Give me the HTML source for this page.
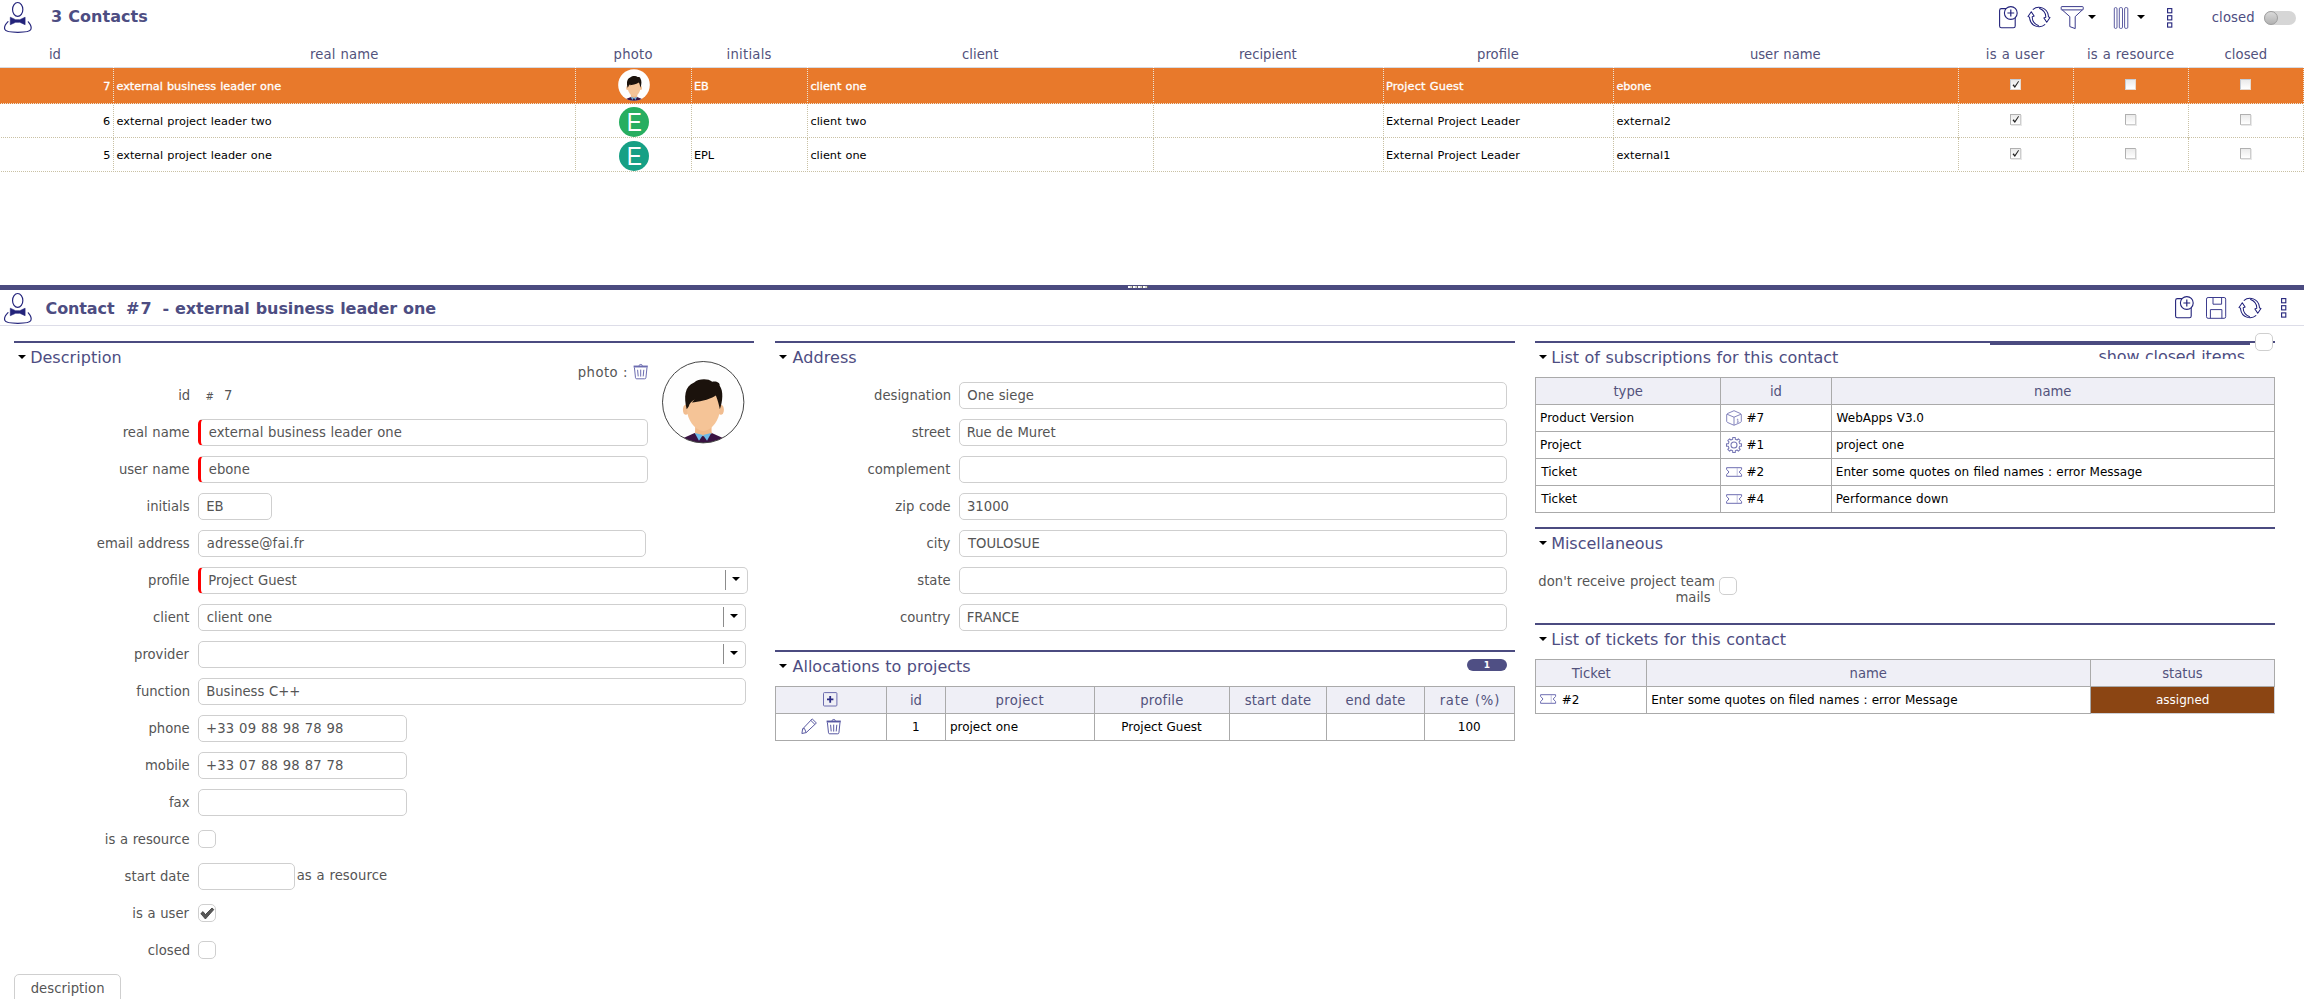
<!DOCTYPE html>
<html><head><meta charset="utf-8"><title>Contacts</title>
<style>
html,body{margin:0;padding:0;background:#fff;}
body{width:2304px;height:999px;position:relative;overflow:hidden;font-family:"DejaVu Sans","Liberation Sans",sans-serif;}
.t{position:absolute;white-space:nowrap;line-height:20px;height:20px;word-spacing:0.034em;}
.b{position:absolute;box-sizing:border-box;}
.in{position:absolute;box-sizing:border-box;border:1px solid #cfcfcf;border-radius:5px;background:#fff;height:27px;}
.req{border-left:3px solid #ff0000;}
.cb{position:absolute;box-sizing:border-box;border:1px solid #cfcfcf;border-radius:5px;background:#fff;width:18px;height:18px;}
.gcb{position:absolute;box-sizing:border-box;border:1px solid;border-color:#b0b0b0 #cdcdcd #cdcdcd #b0b0b0;width:11px;height:11px;background:linear-gradient(#eaeaea,#ffffff);box-shadow:1px 1px 0 #e8e8e8;}
.gcbo{border-color:#c4ccd6 #e6d9cf #e6d9cf #c4ccd6;box-shadow:none;}
svg{position:absolute;overflow:visible;}
.tb{position:absolute;box-sizing:border-box;border-collapse:collapse;}
.hl{position:absolute;height:2px;background:#4b4b80;}
.arr{position:absolute;width:0;height:0;border-left:4px solid transparent;border-right:4px solid transparent;border-top:4px solid #000;}
.cell{position:absolute;box-sizing:border-box;border:1px solid #aaaaaa;}
.hd{background:#efeff6;}
</style></head><body>

<svg style="left:0px;top:0px" width="36" height="36" viewBox="0 0 36 36" fill="none" stroke="#23237b" stroke-width="1.15">
<ellipse cx="17.7" cy="9.45" rx="5.15" ry="6.95"/>
<path d="M10.3 17.2 L10.3 24.7 L15.6 22.3 L19.8 22.3 L25.1 24.7 L25.1 17.2 L19.8 19.7 L15.6 19.7 Z" fill="#23237b" stroke-width="0.6"/>
<path d="M8 21.6 C5.2 24.4 4.1 27.4 4.8 29.4 C5.5 31.3 11 32.3 17.8 32.3 C24.6 32.3 30.2 31.3 30.9 29.4 C31.6 27.4 30.6 24.4 28.3 21.8" stroke-linecap="round"/>
</svg>
<div class="t" style="top:7px;font-size:16px;color:#4d4d82;font-weight:bold;left:50.93px;letter-spacing:0.039px;">3 Contacts</div>
<svg style="left:1998.6px;top:5.6px" width="22" height="24" viewBox="0 0 22 24" fill="none" stroke="#23237b" stroke-width="1.1">
<rect x="0.6" y="2.6" width="15.6" height="19.2" rx="1.8"/>
<circle cx="11.8" cy="7" r="6.4" fill="#fff"/>
<path d="M8.4 7 H15.2 M11.8 3.6 V10.4" stroke-width="1.2"/>
</svg>
<svg style="left:2025.55px;top:4.300000000000001px" width="26" height="26" viewBox="-13 -13 26 26" fill="none" stroke="#1f1f7a" stroke-width="1.05" stroke-linejoin="round">
<path d="M-6.5 -7.8 A9.9 9.9 0 0 1 9.75 -1.7 L9.9 -0.1 L11.5 0.6 L8.1 5.5 L5.1 0.9 L7.1 0.2 L7.1 -0.3 Q7 -6.6 0.2 -9.2" transform="scale(0.955)"/>
<path d="M-6.5 -7.8 A9.9 9.9 0 0 1 9.75 -1.7 L9.9 -0.1 L11.5 0.6 L8.1 5.5 L5.1 0.9 L7.1 0.2 L7.1 -0.3 Q7 -6.6 0.2 -9.2" transform="scale(0.955) rotate(180)"/>
</svg>
<svg style="left:2060px;top:5px" width="26" height="26" viewBox="0 0 26 26" fill="none" stroke="#3a3a8c" stroke-width="1" stroke-linejoin="round">
<rect x="1.2" y="1.6" width="22" height="3.3" rx="0.6"/>
<path d="M2.2 4.9 L9.8 11.6 L9.8 21.6 L15.2 23.6 L15.2 11.6 L22.4 4.9"/>
</svg>
<div class="arr" style="left:2087.5px;top:15px"></div>
<svg style="left:2113px;top:6px" width="18" height="24" viewBox="0 0 18 24" fill="none" stroke="#4a4a96" stroke-width="0.9">
<rect x="1.3" y="1.6" width="2.7" height="20.8" rx="1.2"/><rect x="6.3" y="1.6" width="3.2" height="20.8" rx="1.2"/><rect x="11.6" y="1.6" width="3.2" height="20.8" rx="1.2"/></svg>
<div class="arr" style="left:2136.5px;top:15px"></div>
<svg style="left:2167px;top:8.2px" width="7" height="22" viewBox="0 0 7 22" fill="none" stroke="#23237b" stroke-width="1.1">
<rect x="0.6" y="0.6" width="4.2" height="4.2"/><rect x="0.6" y="7.7" width="4.2" height="4.2"/><rect x="0.6" y="14.9" width="4.2" height="4.2"/></svg>
<div class="t" style="top:8px;font-size:13.2px;color:#4d4d82;left:2211.77px;letter-spacing:0.098px;">closed</div>
<div class="b" style="left:2264px;top:11px;width:32px;height:14px;border-radius:7px;background:#d6d6d6;"></div>
<div class="b" style="left:2264px;top:11px;width:14px;height:14px;border-radius:7px;background:linear-gradient(#dadada,#b2b2b2);border:1px solid #9e9e9e;"></div>
<div class="t" style="top:45px;font-size:13.2px;color:#52527c;left:48.96px;">id</div>
<div class="t" style="top:45px;font-size:13.2px;color:#52527c;left:309.95px;letter-spacing:0.171px;">real name</div>
<div class="t" style="top:45px;font-size:13.2px;color:#52527c;left:613.55px;letter-spacing:0.246px;">photo</div>
<div class="t" style="top:45px;font-size:13.2px;color:#52527c;left:726.61px;letter-spacing:0.236px;">initials</div>
<div class="t" style="top:45px;font-size:13.2px;color:#52527c;left:962.08px;">client</div>
<div class="t" style="top:45px;font-size:13.2px;color:#52527c;left:1238.94px;">recipient</div>
<div class="t" style="top:45px;font-size:13.2px;color:#52527c;left:1477.12px;">profile</div>
<div class="t" style="top:45px;font-size:13.2px;color:#52527c;left:1749.89px;">user name</div>
<div class="t" style="top:45px;font-size:13.2px;color:#52527c;left:1985.86px;letter-spacing:0.223px;">is a user</div>
<div class="t" style="top:45px;font-size:13.2px;color:#52527c;left:2086.96px;letter-spacing:0.184px;">is a resource</div>
<div class="t" style="top:45px;font-size:13.2px;color:#52527c;left:2224.52px;letter-spacing:0.058px;">closed</div>
<div class="b" style="left:0px;top:67px;width:2304px;height:1px;background:#d6dbe3;"></div>
<div class="b" style="left:113px;top:67px;width:1px;height:1px;background:#fff;"></div>
<div class="b" style="left:575px;top:67px;width:1px;height:1px;background:#fff;"></div>
<div class="b" style="left:691px;top:67px;width:1px;height:1px;background:#fff;"></div>
<div class="b" style="left:807px;top:67px;width:1px;height:1px;background:#fff;"></div>
<div class="b" style="left:1153px;top:67px;width:1px;height:1px;background:#fff;"></div>
<div class="b" style="left:1383px;top:67px;width:1px;height:1px;background:#fff;"></div>
<div class="b" style="left:1613px;top:67px;width:1px;height:1px;background:#fff;"></div>
<div class="b" style="left:1958px;top:67px;width:1px;height:1px;background:#fff;"></div>
<div class="b" style="left:2073px;top:67px;width:1px;height:1px;background:#fff;"></div>
<div class="b" style="left:2188px;top:67px;width:1px;height:1px;background:#fff;"></div>
<div class="b" style="left:2303px;top:67px;width:1px;height:1px;background:#fff;"></div>
<div class="b" style="left:0px;top:68px;width:2304px;height:36px;background:#e8792b;"></div>
<div class="b" style="left:1px;top:103px;width:2303px;height:1px;background:repeating-linear-gradient(to right,#eae4d6 0,#eae4d6 1px,transparent 1px,transparent 2px);"></div>
<div class="b" style="left:1px;top:137px;width:2303px;height:1px;background:repeating-linear-gradient(to right,#c9c1a4 0,#c9c1a4 1px,transparent 1px,transparent 2px);"></div>
<div class="b" style="left:1px;top:171px;width:2303px;height:1px;background:repeating-linear-gradient(to right,#c9c1a4 0,#c9c1a4 1px,transparent 1px,transparent 2px);"></div>
<div class="b" style="left:113px;top:69px;width:1px;height:33px;background:repeating-linear-gradient(to bottom,#eae4d6 0,#eae4d6 1px,transparent 1px,transparent 2px);"></div>
<div class="b" style="left:113px;top:105px;width:1px;height:65px;background:repeating-linear-gradient(to bottom,#c9c1a4 0,#c9c1a4 1px,transparent 1px,transparent 2px);"></div>
<div class="b" style="left:113px;top:138px;width:1px;height:1px;background:#c9c1a4;"></div>
<div class="b" style="left:575px;top:69px;width:1px;height:33px;background:repeating-linear-gradient(to bottom,#eae4d6 0,#eae4d6 1px,transparent 1px,transparent 2px);"></div>
<div class="b" style="left:575px;top:105px;width:1px;height:65px;background:repeating-linear-gradient(to bottom,#c9c1a4 0,#c9c1a4 1px,transparent 1px,transparent 2px);"></div>
<div class="b" style="left:575px;top:138px;width:1px;height:1px;background:#c9c1a4;"></div>
<div class="b" style="left:691px;top:69px;width:1px;height:33px;background:repeating-linear-gradient(to bottom,#eae4d6 0,#eae4d6 1px,transparent 1px,transparent 2px);"></div>
<div class="b" style="left:691px;top:105px;width:1px;height:65px;background:repeating-linear-gradient(to bottom,#c9c1a4 0,#c9c1a4 1px,transparent 1px,transparent 2px);"></div>
<div class="b" style="left:691px;top:138px;width:1px;height:1px;background:#c9c1a4;"></div>
<div class="b" style="left:807px;top:69px;width:1px;height:33px;background:repeating-linear-gradient(to bottom,#eae4d6 0,#eae4d6 1px,transparent 1px,transparent 2px);"></div>
<div class="b" style="left:807px;top:105px;width:1px;height:65px;background:repeating-linear-gradient(to bottom,#c9c1a4 0,#c9c1a4 1px,transparent 1px,transparent 2px);"></div>
<div class="b" style="left:807px;top:138px;width:1px;height:1px;background:#c9c1a4;"></div>
<div class="b" style="left:1153px;top:69px;width:1px;height:33px;background:repeating-linear-gradient(to bottom,#eae4d6 0,#eae4d6 1px,transparent 1px,transparent 2px);"></div>
<div class="b" style="left:1153px;top:105px;width:1px;height:65px;background:repeating-linear-gradient(to bottom,#c9c1a4 0,#c9c1a4 1px,transparent 1px,transparent 2px);"></div>
<div class="b" style="left:1153px;top:138px;width:1px;height:1px;background:#c9c1a4;"></div>
<div class="b" style="left:1383px;top:69px;width:1px;height:33px;background:repeating-linear-gradient(to bottom,#eae4d6 0,#eae4d6 1px,transparent 1px,transparent 2px);"></div>
<div class="b" style="left:1383px;top:105px;width:1px;height:65px;background:repeating-linear-gradient(to bottom,#c9c1a4 0,#c9c1a4 1px,transparent 1px,transparent 2px);"></div>
<div class="b" style="left:1383px;top:138px;width:1px;height:1px;background:#c9c1a4;"></div>
<div class="b" style="left:1613px;top:69px;width:1px;height:33px;background:repeating-linear-gradient(to bottom,#eae4d6 0,#eae4d6 1px,transparent 1px,transparent 2px);"></div>
<div class="b" style="left:1613px;top:105px;width:1px;height:65px;background:repeating-linear-gradient(to bottom,#c9c1a4 0,#c9c1a4 1px,transparent 1px,transparent 2px);"></div>
<div class="b" style="left:1613px;top:138px;width:1px;height:1px;background:#c9c1a4;"></div>
<div class="b" style="left:1958px;top:69px;width:1px;height:33px;background:repeating-linear-gradient(to bottom,#eae4d6 0,#eae4d6 1px,transparent 1px,transparent 2px);"></div>
<div class="b" style="left:1958px;top:105px;width:1px;height:65px;background:repeating-linear-gradient(to bottom,#c9c1a4 0,#c9c1a4 1px,transparent 1px,transparent 2px);"></div>
<div class="b" style="left:1958px;top:138px;width:1px;height:1px;background:#c9c1a4;"></div>
<div class="b" style="left:2073px;top:69px;width:1px;height:33px;background:repeating-linear-gradient(to bottom,#eae4d6 0,#eae4d6 1px,transparent 1px,transparent 2px);"></div>
<div class="b" style="left:2073px;top:105px;width:1px;height:65px;background:repeating-linear-gradient(to bottom,#c9c1a4 0,#c9c1a4 1px,transparent 1px,transparent 2px);"></div>
<div class="b" style="left:2073px;top:138px;width:1px;height:1px;background:#c9c1a4;"></div>
<div class="b" style="left:2188px;top:69px;width:1px;height:33px;background:repeating-linear-gradient(to bottom,#eae4d6 0,#eae4d6 1px,transparent 1px,transparent 2px);"></div>
<div class="b" style="left:2188px;top:105px;width:1px;height:65px;background:repeating-linear-gradient(to bottom,#c9c1a4 0,#c9c1a4 1px,transparent 1px,transparent 2px);"></div>
<div class="b" style="left:2188px;top:138px;width:1px;height:1px;background:#c9c1a4;"></div>
<div class="b" style="left:2303px;top:69px;width:1px;height:33px;background:repeating-linear-gradient(to bottom,#eae4d6 0,#eae4d6 1px,transparent 1px,transparent 2px);"></div>
<div class="b" style="left:2303px;top:105px;width:1px;height:65px;background:repeating-linear-gradient(to bottom,#c9c1a4 0,#c9c1a4 1px,transparent 1px,transparent 2px);"></div>
<div class="b" style="left:2303px;top:138px;width:1px;height:1px;background:#c9c1a4;"></div>
<div class="t" style="top:77px;font-size:11.3px;color:#fff;right:2193.53px;text-align:right;-webkit-text-stroke:0.3px #fff;">7</div>
<div class="t" style="top:77px;font-size:11.3px;color:#fff;left:116.38px;letter-spacing:0.010px;-webkit-text-stroke:0.3px #fff;">external business leader one</div>
<div class="t" style="top:77px;font-size:11.3px;color:#fff;left:693.89px;-webkit-text-stroke:0.3px #fff;">EB</div>
<div class="t" style="top:77px;font-size:11.3px;color:#fff;left:810.38px;letter-spacing:0.011px;-webkit-text-stroke:0.3px #fff;">client one</div>
<div class="t" style="top:77px;font-size:11.3px;color:#fff;left:1385.89px;letter-spacing:0.156px;-webkit-text-stroke:0.3px #fff;">Project Guest</div>
<div class="t" style="top:77px;font-size:11.3px;color:#fff;left:1616.38px;letter-spacing:-0.079px;-webkit-text-stroke:0.3px #fff;">ebone</div>
<div class="t" style="top:112px;font-size:11.3px;color:#000;right:2193.79px;text-align:right;">6</div>
<div class="t" style="top:112px;font-size:11.3px;color:#000;left:116.38px;letter-spacing:0.049px;">external project leader two</div>
<div class="t" style="top:112px;font-size:11.3px;color:#000;left:810.38px;letter-spacing:0.062px;">client two</div>
<div class="t" style="top:112px;font-size:11.3px;color:#000;left:1385.89px;letter-spacing:0.082px;">External Project Leader</div>
<div class="t" style="top:112px;font-size:11.3px;color:#000;left:1616.38px;letter-spacing:0.123px;">external2</div>
<div class="t" style="top:146px;font-size:11.3px;color:#000;right:2193.51px;text-align:right;">5</div>
<div class="t" style="top:146px;font-size:11.3px;color:#000;left:116.38px;letter-spacing:0.043px;">external project leader one</div>
<div class="t" style="top:146px;font-size:11.3px;color:#000;left:693.89px;">EPL</div>
<div class="t" style="top:146px;font-size:11.3px;color:#000;left:810.38px;letter-spacing:0.011px;">client one</div>
<div class="t" style="top:146px;font-size:11.3px;color:#000;left:1385.89px;letter-spacing:0.082px;">External Project Leader</div>
<div class="t" style="top:146px;font-size:11.3px;color:#000;left:1616.38px;letter-spacing:0.049px;">external1</div>
<svg style="left:618px;top:69px" width="32" height="32" viewBox="0 0 82 82">
<defs><clipPath id="g1c"><circle cx="41" cy="41" r="40.5"/></clipPath></defs>
<circle cx="41" cy="41" r="40.5" fill="#fefefe"/>
<g clip-path="url(#g1c)">
<path d="M12 88 L22 76.5 L33 71.5 L49 71.5 L60 76.5 L70 88 Z" fill="#3a1242"/>
<path d="M33.2 60 L49.2 60 L49.4 72.5 L41 75 L32.8 72.5 Z" fill="#f0b98a"/>
<path d="M32.6 71.6 L40.8 73.6 L36.8 79.4 Z" fill="#6cb9e8"/>
<path d="M49 71.6 L40.8 73.6 L44.8 79.4 Z" fill="#6cb9e8"/>
<ellipse cx="23.8" cy="48.6" rx="3" ry="5" fill="#f1bd90"/>
<ellipse cx="58.6" cy="48.6" rx="3" ry="5" fill="#f1bd90"/>
<path d="M24.4 40 C24.4 26 30 24 41.2 24 C52.4 24 58 26 58 40 L57.2 52 C55 62 48 69.6 41.2 69.6 C34.4 69.6 27.4 62 25.2 52 Z" fill="#f5c497"/>
<path d="M24.6 48 C21.6 36 22.4 25 32 21.4 C36 17.4 46 17 50 20.6 C54 19.6 58 21.6 57.4 24.6 C61.4 30 60.4 40 57.6 48 C56.4 43 55.6 39 53.6 34.4 C46 39.4 36 40.4 29.6 41.4 L32.6 38.4 C29 40.4 27.2 42.4 26.6 45.4 Z" fill="#1b120c"/>
</g>
<circle cx="41" cy="41" r="40.5" fill="none" stroke="none" stroke-width="0"/>
</svg>
<div class="b" style="left:619px;top:107px;width:30px;height:30px;border-radius:15px;background:#27ae60;color:#fff;font-size:26px;line-height:30px;text-align:center;font-family:'Liberation Sans',sans-serif;"><span style="display:inline-block;transform:translateX(0.6px) scaleX(0.87)">E</span></div>
<div class="b" style="left:619px;top:141px;width:30px;height:30px;border-radius:15px;background:#16a085;color:#fff;font-size:26px;line-height:30px;text-align:center;font-family:'Liberation Sans',sans-serif;"><span style="display:inline-block;transform:translateX(0.6px) scaleX(0.87)">E</span></div>
<div class="gcb gcbo" style="left:2010px;top:79px"><svg style="left:0px;top:0px" width="9" height="9" viewBox="0 0 9 9"><path d="M1.5 5.3 L2.9 4.3 L3.8 5.9 L7.3 0.9 L8 1.4 L3.9 8.1 Z" fill="#222"/></svg></div>
<div class="gcb gcbo" style="left:2125px;top:79px"></div>
<div class="gcb gcbo" style="left:2240px;top:79px"></div>
<div class="gcb" style="left:2010px;top:114px"><svg style="left:0px;top:0px" width="9" height="9" viewBox="0 0 9 9"><path d="M1.5 5.3 L2.9 4.3 L3.8 5.9 L7.3 0.9 L8 1.4 L3.9 8.1 Z" fill="#222"/></svg></div>
<div class="gcb" style="left:2125px;top:114px"></div>
<div class="gcb" style="left:2240px;top:114px"></div>
<div class="gcb" style="left:2010px;top:148px"><svg style="left:0px;top:0px" width="9" height="9" viewBox="0 0 9 9"><path d="M1.5 5.3 L2.9 4.3 L3.8 5.9 L7.3 0.9 L8 1.4 L3.9 8.1 Z" fill="#222"/></svg></div>
<div class="gcb" style="left:2125px;top:148px"></div>
<div class="gcb" style="left:2240px;top:148px"></div>
<div class="b" style="left:0px;top:285px;width:2304px;height:5px;background:#4b4b80;"></div>
<div class="b" style="left:1128px;top:286px;width:2px;height:2px;background:#fff;"></div>
<div class="b" style="left:1130px;top:286px;width:2px;height:2px;background:#d4d4cc;"></div>
<div class="b" style="left:1132px;top:286px;width:1px;height:2px;background:#6a6a60;"></div>
<div class="b" style="left:1133px;top:286px;width:2px;height:2px;background:#fff;"></div>
<div class="b" style="left:1135px;top:286px;width:2px;height:2px;background:#d4d4cc;"></div>
<div class="b" style="left:1137px;top:286px;width:1px;height:2px;background:#6a6a60;"></div>
<div class="b" style="left:1138px;top:286px;width:2px;height:2px;background:#fff;"></div>
<div class="b" style="left:1140px;top:286px;width:2px;height:2px;background:#d4d4cc;"></div>
<div class="b" style="left:1142px;top:286px;width:1px;height:2px;background:#6a6a60;"></div>
<div class="b" style="left:1143px;top:286px;width:2px;height:2px;background:#fff;"></div>
<div class="b" style="left:1145px;top:286px;width:2px;height:2px;background:#d4d4cc;"></div>
<div class="b" style="left:1147px;top:286px;width:1px;height:2px;background:#6a6a60;"></div>
<svg style="left:0px;top:291.2px" width="36" height="36" viewBox="0 0 36 36" fill="none" stroke="#23237b" stroke-width="1.15">
<ellipse cx="17.7" cy="9.45" rx="5.15" ry="6.95"/>
<path d="M10.3 17.2 L10.3 24.7 L15.6 22.3 L19.8 22.3 L25.1 24.7 L25.1 17.2 L19.8 19.7 L15.6 19.7 Z" fill="#23237b" stroke-width="0.6"/>
<path d="M8 21.6 C5.2 24.4 4.1 27.4 4.8 29.4 C5.5 31.3 11 32.3 17.8 32.3 C24.6 32.3 30.2 31.3 30.9 29.4 C31.6 27.4 30.6 24.4 28.3 21.8" stroke-linecap="round"/>
</svg>
<div class="t" style="top:299px;font-size:16px;color:#4d4d82;font-weight:bold;left:45.50px;letter-spacing:-0.107px;">Contact</div>
<div class="t" style="top:299px;font-size:16px;color:#4d4d82;font-weight:bold;left:125.91px;letter-spacing:1.220px;">#7</div>
<div class="t" style="top:299px;font-size:16px;color:#4d4d82;font-weight:bold;left:162.53px;letter-spacing:-0.083px;">- external business leader one</div>
<div class="b" style="left:0px;top:325px;width:2304px;height:1px;background:#dddde8;"></div>
<svg style="left:2174.6px;top:296.2px" width="22" height="24" viewBox="0 0 22 24" fill="none" stroke="#23237b" stroke-width="1.1">
<rect x="0.6" y="2.6" width="15.6" height="19.2" rx="1.8"/>
<circle cx="11.8" cy="7" r="6.4" fill="#fff"/>
<path d="M8.4 7 H15.2 M11.8 3.6 V10.4" stroke-width="1.2"/>
</svg>
<svg style="left:2205px;top:296px" width="24" height="24" viewBox="0 0 24 24" fill="none" stroke="#3c3c8e" stroke-width="1">
<rect x="1.5" y="1.5" width="19.2" height="20.8" rx="1.6"/>
<path d="M8 1.5 V8.2 H16.6 V1.5"/>
<path d="M5.4 22.3 V13.6 H16.9 V22.3"/>
</svg>
<svg style="left:2236.6px;top:294.8px" width="26" height="26" viewBox="-13 -13 26 26" fill="none" stroke="#1f1f7a" stroke-width="1.05" stroke-linejoin="round">
<path d="M-6.5 -7.8 A9.9 9.9 0 0 1 9.75 -1.7 L9.9 -0.1 L11.5 0.6 L8.1 5.5 L5.1 0.9 L7.1 0.2 L7.1 -0.3 Q7 -6.6 0.2 -9.2" transform="scale(0.955)"/>
<path d="M-6.5 -7.8 A9.9 9.9 0 0 1 9.75 -1.7 L9.9 -0.1 L11.5 0.6 L8.1 5.5 L5.1 0.9 L7.1 0.2 L7.1 -0.3 Q7 -6.6 0.2 -9.2" transform="scale(0.955) rotate(180)"/>
</svg>
<svg style="left:2281px;top:298.1px" width="7" height="22" viewBox="0 0 7 22" fill="none" stroke="#23237b" stroke-width="1.1">
<rect x="0.6" y="0.6" width="4.2" height="4.2"/><rect x="0.6" y="7.7" width="4.2" height="4.2"/><rect x="0.6" y="14.9" width="4.2" height="4.2"/></svg>
<div class="hl" style="left:14px;top:341px;width:740px"></div>
<div class="arr" style="left:18.4px;top:355px"></div>
<div class="t" style="top:348px;font-size:16px;color:#4d4d82;left:30.13px;letter-spacing:0.040px;">Description</div>
<div class="t" style="top:386px;font-size:13.2px;color:#555555;right:2113.80px;text-align:right;">id</div>
<div class="t" style="top:387px;font-size:10px;color:#555555;left:205.40px;font-family:"DejaVu Serif",serif;">#</div>
<div class="t" style="top:386px;font-size:13.2px;color:#555555;left:223.92px;">7</div>
<div class="t" style="top:363px;font-size:13.2px;color:#555555;left:577.80px;letter-spacing:0.437px;">photo :</div>
<svg style="left:632.6px;top:363.4px" width="16" height="17" viewBox="0 0 16 17" fill="none" stroke="#6c6cb0" stroke-width="1">
<path d="M6 2.8 C6 1 9.4 1 9.4 2.8"/>
<path d="M0.6 3.5 H14.8" stroke-width="1.9"/>
<path d="M1.4 4.4 L2.5 14.8 C2.6 15.6 3.1 15.8 3.7 15.8 H11.7 C12.3 15.8 12.8 15.6 12.9 14.8 L14 4.4"/>
<path d="M4.6 6.8 L5.2 13.4 M7.7 6.6 V13.6 M10.8 6.8 L10.2 13.4"/>
</svg>
<svg style="left:661.8px;top:360.6px" width="82.4" height="82.4" viewBox="0 0 82 82">
<defs><clipPath id="g2c"><circle cx="41" cy="41" r="40.5"/></clipPath></defs>
<circle cx="41" cy="41" r="40.5" fill="#fefefe"/>
<g clip-path="url(#g2c)">
<path d="M12 88 L22 76.5 L33 71.5 L49 71.5 L60 76.5 L70 88 Z" fill="#3a1242"/>
<path d="M33.2 60 L49.2 60 L49.4 72.5 L41 75 L32.8 72.5 Z" fill="#f0b98a"/>
<path d="M32.6 71.6 L40.8 73.6 L36.8 79.4 Z" fill="#6cb9e8"/>
<path d="M49 71.6 L40.8 73.6 L44.8 79.4 Z" fill="#6cb9e8"/>
<ellipse cx="23.8" cy="48.6" rx="3" ry="5" fill="#f1bd90"/>
<ellipse cx="58.6" cy="48.6" rx="3" ry="5" fill="#f1bd90"/>
<path d="M24.4 40 C24.4 26 30 24 41.2 24 C52.4 24 58 26 58 40 L57.2 52 C55 62 48 69.6 41.2 69.6 C34.4 69.6 27.4 62 25.2 52 Z" fill="#f5c497"/>
<path d="M24.6 48 C21.6 36 22.4 25 32 21.4 C36 17.4 46 17 50 20.6 C54 19.6 58 21.6 57.4 24.6 C61.4 30 60.4 40 57.6 48 C56.4 43 55.6 39 53.6 34.4 C46 39.4 36 40.4 29.6 41.4 L32.6 38.4 C29 40.4 27.2 42.4 26.6 45.4 Z" fill="#1b120c"/>
</g>
<circle cx="41" cy="41" r="40.5" fill="none" stroke="#444" stroke-width="0.9951456310679612"/>
</svg>
<div class="t" style="top:423px;font-size:13.2px;color:#555555;right:2114.30px;text-align:right;">real name</div>
<div class="in req" style="left:198px;top:419px;width:450px"></div>
<div class="t" style="top:423px;font-size:13.2px;color:#555555;left:208.77px;letter-spacing:0.039px;">external business leader one</div>
<div class="t" style="top:460px;font-size:13.2px;color:#555555;right:2114.30px;text-align:right;">user name</div>
<div class="in req" style="left:198px;top:456px;width:450px"></div>
<div class="t" style="top:460px;font-size:13.2px;color:#555555;left:208.77px;">ebone</div>
<div class="t" style="top:497px;font-size:13.2px;color:#555555;right:2114.36px;text-align:right;">initials</div>
<div class="in" style="left:198px;top:493px;width:74px"></div>
<div class="t" style="top:497px;font-size:13.2px;color:#555555;left:206.20px;">EB</div>
<div class="t" style="top:534px;font-size:13.2px;color:#555555;right:2114.36px;text-align:right;">email address</div>
<div class="in" style="left:198px;top:530px;width:448px"></div>
<div class="t" style="top:534px;font-size:13.2px;color:#555555;left:206.71px;letter-spacing:0.147px;">adresse@fai.fr</div>
<div class="t" style="top:571px;font-size:13.2px;color:#555555;right:2114.30px;text-align:right;">profile</div>
<div class="in req" style="left:198px;top:567px;width:550px"></div>
<div class="t" style="top:571px;font-size:13.2px;color:#555555;left:208.20px;">Project Guest</div>
<div class="b" style="left:725px;top:570px;width:1px;height:20px;background:#8c8c8c"></div>
<div class="arr" style="left:731.5px;top:577px"></div>
<div class="t" style="top:608px;font-size:13.2px;color:#555555;right:2114.68px;text-align:right;">client</div>
<div class="in" style="left:198px;top:604px;width:548px"></div>
<div class="t" style="top:608px;font-size:13.2px;color:#555555;left:206.77px;">client one</div>
<div class="b" style="left:723px;top:607px;width:1px;height:20px;background:#8c8c8c"></div>
<div class="arr" style="left:729.5px;top:614px"></div>
<div class="t" style="top:645px;font-size:13.2px;color:#555555;right:2115.00px;text-align:right;">provider</div>
<div class="in" style="left:198px;top:641px;width:548px"></div>
<div class="b" style="left:723px;top:644px;width:1px;height:20px;background:#8c8c8c"></div>
<div class="arr" style="left:729.5px;top:651px"></div>
<div class="t" style="top:682px;font-size:13.2px;color:#555555;right:2113.88px;text-align:right;">function</div>
<div class="in" style="left:198px;top:678px;width:548px"></div>
<div class="t" style="top:682px;font-size:13.2px;color:#555555;left:206.20px;">Business C++</div>
<div class="t" style="top:719px;font-size:13.2px;color:#555555;right:2114.30px;text-align:right;">phone</div>
<div class="in" style="left:198px;top:715px;width:209px"></div>
<div class="t" style="top:719px;font-size:13.2px;color:#555555;left:206.10px;letter-spacing:0.139px;">+33 09 88 98 78 98</div>
<div class="t" style="top:756px;font-size:13.2px;color:#555555;right:2114.30px;text-align:right;">mobile</div>
<div class="in" style="left:198px;top:752px;width:209px"></div>
<div class="t" style="top:756px;font-size:13.2px;color:#555555;left:206.10px;letter-spacing:0.139px;">+33 07 88 98 87 78</div>
<div class="t" style="top:793px;font-size:13.2px;color:#555555;right:2114.57px;text-align:right;">fax</div>
<div class="in" style="left:198px;top:789px;width:209px"></div>
<div class="t" style="top:830px;font-size:13.2px;color:#555555;right:2114.30px;text-align:right;">is a resource</div>
<div class="cb" style="left:198px;top:830px"></div>
<div class="t" style="top:867px;font-size:13.2px;color:#555555;right:2114.30px;text-align:right;">start date</div>
<div class="in" style="left:198px;top:863px;width:97px"></div>
<div class="t" style="top:866px;font-size:13.2px;color:#555555;left:296.71px;letter-spacing:0.087px;">as a resource</div>
<div class="t" style="top:904px;font-size:13.2px;color:#555555;right:2115.00px;text-align:right;">is a user</div>
<div class="cb" style="left:198px;top:904px"></div>
<svg style="left:199px;top:905px" width="16" height="16" viewBox="0 0 16 16"><path d="M1.8 8.6 L4 6.6 L6.4 9.6 L13 3 L14.8 4.6 L6.4 14 Z" fill="#595959" stroke="#3a3a3a" stroke-width="0.8" stroke-linejoin="round"/></svg>
<div class="t" style="top:941px;font-size:13.2px;color:#555555;right:2113.80px;text-align:right;">closed</div>
<div class="cb" style="left:198px;top:941px"></div>
<div class="b" style="left:14px;top:974px;width:107px;height:40px;border:1px solid #cfcfcf;border-radius:5px;"></div>
<div class="t" style="top:979px;font-size:13.2px;color:#555555;left:30.67px;letter-spacing:0.053px;">description</div>
<div class="hl" style="left:775px;top:341px;width:740px"></div>
<div class="arr" style="left:779.4px;top:355px"></div>
<div class="t" style="top:348px;font-size:16px;color:#4d4d82;left:792.58px;letter-spacing:0.065px;">Address</div>
<div class="t" style="top:386px;font-size:13.2px;color:#555555;right:1352.88px;text-align:right;">designation</div>
<div class="in" style="left:959px;top:382px;width:548px"></div>
<div class="t" style="top:386px;font-size:13.2px;color:#555555;left:967.26px;">One siege</div>
<div class="t" style="top:423px;font-size:13.2px;color:#555555;right:1353.68px;text-align:right;">street</div>
<div class="in" style="left:959px;top:419px;width:548px"></div>
<div class="t" style="top:423px;font-size:13.2px;color:#555555;left:966.70px;">Rue de Muret</div>
<div class="t" style="top:460px;font-size:13.2px;color:#555555;right:1353.68px;text-align:right;">complement</div>
<div class="in" style="left:959px;top:456px;width:548px"></div>
<div class="t" style="top:497px;font-size:13.2px;color:#555555;right:1353.30px;text-align:right;">zip code</div>
<div class="in" style="left:959px;top:493px;width:548px"></div>
<div class="t" style="top:497px;font-size:13.2px;color:#555555;left:966.99px;">31000</div>
<div class="t" style="top:534px;font-size:13.2px;color:#555555;right:1353.61px;text-align:right;">city</div>
<div class="in" style="left:959px;top:530px;width:548px"></div>
<div class="t" style="top:534px;font-size:13.2px;color:#555555;left:968.04px;">TOULOSUE</div>
<div class="t" style="top:571px;font-size:13.2px;color:#555555;right:1353.30px;text-align:right;">state</div>
<div class="in" style="left:959px;top:567px;width:548px"></div>
<div class="t" style="top:608px;font-size:13.2px;color:#555555;right:1353.61px;text-align:right;">country</div>
<div class="in" style="left:959px;top:604px;width:548px"></div>
<div class="t" style="top:608px;font-size:13.2px;color:#555555;left:966.70px;">FRANCE</div>
<div class="hl" style="left:775px;top:650px;width:740px"></div>
<div class="arr" style="left:779.4px;top:664px"></div>
<div class="t" style="top:657px;font-size:16px;color:#4d4d82;left:792.58px;letter-spacing:-0.018px;">Allocations to projects</div>
<div class="b" style="left:1466.6px;top:659px;width:40.6px;height:12px;border-radius:6px;background:#4f4f84;"></div>
<div class="t" style="top:655px;font-size:9px;color:#fff;font-weight:bold;left:1483.67px;">1</div>
<div class="cell hd" style="left:775px;top:686px;width:112px;height:28px"></div>
<div class="cell hd" style="left:886px;top:686px;width:60px;height:28px"></div>
<div class="cell hd" style="left:945px;top:686px;width:150px;height:28px"></div>
<div class="cell hd" style="left:1094px;top:686px;width:136px;height:28px"></div>
<div class="cell hd" style="left:1229px;top:686px;width:98px;height:28px"></div>
<div class="cell hd" style="left:1326px;top:686px;width:99px;height:28px"></div>
<div class="cell hd" style="left:1424px;top:686px;width:91px;height:28px"></div>
<div class="cell" style="left:775px;top:713px;width:112px;height:28px"></div>
<div class="cell" style="left:886px;top:713px;width:60px;height:28px"></div>
<div class="cell" style="left:945px;top:713px;width:150px;height:28px"></div>
<div class="cell" style="left:1094px;top:713px;width:136px;height:28px"></div>
<div class="cell" style="left:1229px;top:713px;width:98px;height:28px"></div>
<div class="cell" style="left:1326px;top:713px;width:99px;height:28px"></div>
<div class="cell" style="left:1424px;top:713px;width:91px;height:28px"></div>
<div class="t" style="top:691px;font-size:13.2px;color:#52527c;left:909.96px;">id</div>
<div class="t" style="top:691px;font-size:13.2px;color:#52527c;left:995.55px;letter-spacing:0.374px;">project</div>
<div class="t" style="top:691px;font-size:13.2px;color:#52527c;left:1140.15px;letter-spacing:0.258px;">profile</div>
<div class="t" style="top:691px;font-size:13.2px;color:#52527c;left:1244.78px;letter-spacing:0.147px;">start date</div>
<div class="t" style="top:691px;font-size:13.2px;color:#52527c;left:1345.62px;letter-spacing:0.073px;">end date</div>
<div class="t" style="top:691px;font-size:13.2px;color:#52527c;left:1439.65px;letter-spacing:0.769px;">rate (%)</div>
<svg style="left:823.3px;top:692.2px" width="16" height="16" viewBox="0 0 16 16" fill="none">
<rect x="0.5" y="0.6" width="13.4" height="13.4" rx="0.9" stroke="#6c6cae" stroke-width="1"/>
<path d="M4 7.3 H10.4 M7.2 3.9 V10.7" stroke="#2c2c84" stroke-width="1.8"/></svg>
<svg style="left:801.4px;top:718.3px" width="17" height="17" viewBox="0 0 17 17" fill="none" stroke="#5a5aa2" stroke-width="1" stroke-linejoin="round">
<path d="M11.2 0.9 L15.4 5 L5.2 14.6 L0.9 15.5 L1.6 11 Z"/>
<path d="M9.8 2.4 L13.9 6.4 M1.6 11 L3.4 10.4 L5.2 14.6"/>
</svg>
<svg style="left:825.8px;top:717.9px" width="16" height="17" viewBox="0 0 16 17" fill="none" stroke="#5858a2" stroke-width="1">
<path d="M6 2.8 C6 1 9.4 1 9.4 2.8"/>
<path d="M0.6 3.5 H14.8" stroke-width="1.9"/>
<path d="M1.4 4.4 L2.5 14.8 C2.6 15.6 3.1 15.8 3.7 15.8 H11.7 C12.3 15.8 12.8 15.6 12.9 14.8 L14 4.4"/>
<path d="M4.6 6.8 L5.2 13.4 M7.7 6.6 V13.6 M10.8 6.8 L10.2 13.4"/>
</svg>
<div class="t" style="top:717px;font-size:12px;color:#000;left:912.08px;">1</div>
<div class="t" style="top:717px;font-size:12px;color:#000;left:949.91px;">project one</div>
<div class="t" style="top:717px;font-size:12px;color:#000;left:1121.29px;">Project Guest</div>
<div class="t" style="top:717px;font-size:12px;color:#000;left:1457.79px;">100</div>
<div class="hl" style="left:1535px;top:341px;width:740px"></div>
<div class="arr" style="left:1539.4px;top:355px"></div>
<div class="t" style="top:348px;font-size:16px;color:#4d4d82;left:1551.13px;letter-spacing:-0.035px;">List of subscriptions for this contact</div>
<div class="b" style="left:1990px;top:341px;width:260px;height:4.4px;background:#4b4b80;"></div>
<div class="cb" style="left:2255px;top:333px;"></div>
<div class="b" style="left:2090px;top:346px;width:160px;height:13px;overflow:hidden;"><div class="t" style="left:8.5px;top:1px;font-size:16px;color:#4d4d82;letter-spacing:-0.11px">show closed items</div></div>
<div class="cell hd" style="left:1535px;top:377px;width:186px;height:28px"></div>
<div class="cell hd" style="left:1720px;top:377px;width:112px;height:28px"></div>
<div class="cell hd" style="left:1831px;top:377px;width:444px;height:28px"></div>
<div class="cell" style="left:1535px;top:404px;width:186px;height:28px"></div>
<div class="cell" style="left:1720px;top:404px;width:112px;height:28px"></div>
<div class="cell" style="left:1831px;top:404px;width:444px;height:28px"></div>
<div class="cell" style="left:1535px;top:431px;width:186px;height:28px"></div>
<div class="cell" style="left:1720px;top:431px;width:112px;height:28px"></div>
<div class="cell" style="left:1831px;top:431px;width:444px;height:28px"></div>
<div class="cell" style="left:1535px;top:458px;width:186px;height:28px"></div>
<div class="cell" style="left:1720px;top:458px;width:112px;height:28px"></div>
<div class="cell" style="left:1831px;top:458px;width:444px;height:28px"></div>
<div class="cell" style="left:1535px;top:485px;width:186px;height:28px"></div>
<div class="cell" style="left:1720px;top:485px;width:112px;height:28px"></div>
<div class="cell" style="left:1831px;top:485px;width:444px;height:28px"></div>
<div class="t" style="top:382px;font-size:13.2px;color:#52527c;left:1613.44px;">type</div>
<div class="t" style="top:382px;font-size:13.2px;color:#52527c;left:1769.96px;">id</div>
<div class="t" style="top:382px;font-size:13.2px;color:#52527c;left:2034.05px;">name</div>
<div class="t" style="top:408px;font-size:12px;color:#000;left:1540.12px;">Product Version</div>
<svg style="left:1726px;top:410px" width="16" height="16" viewBox="0 0 16 16" fill="none" stroke="#7676b4" stroke-width="0.9" stroke-linejoin="round">
<path d="M8 0.7 L14.6 3.6 Q15.3 4 15.3 4.8 L15.3 11.2 Q15.3 12 14.6 12.4 L8 15.3 L1.4 12.4 Q0.7 12 0.7 11.2 L0.7 4.8 Q0.7 4 1.4 3.6 Z"/>
<path d="M1 4.2 L8 7.2 L15 4.2 M8 7.2 V15"/>
<path d="M10.8 9.6 L11.8 9 V12.2 M10.8 12.6 L12.8 11.8" stroke-width="0.7"/>
</svg>
<div class="t" style="top:408px;font-size:12px;color:#000;left:1746.57px;">#7</div>
<div class="t" style="top:408px;font-size:12px;color:#000;left:1836.60px;">WebApps V3.0</div>
<div class="t" style="top:435px;font-size:12px;color:#000;left:1540.12px;">Project</div>
<svg style="left:1726px;top:437px" width="16" height="16" viewBox="0 0 16 16" fill="none" stroke="#7676b4" stroke-width="1.05" stroke-linejoin="round">
<path d="M6.71 0.51 L9.29 0.51 L9.32 2.25 L11.13 3.00 L12.39 1.79 L14.21 3.61 L13.00 4.86 L13.75 6.68 L15.49 6.71 L15.49 9.29 L13.75 9.32 L13.00 11.13 L14.21 12.39 L12.39 14.21 L11.14 13.00 L9.32 13.75 L9.29 15.49 L6.71 15.49 L6.68 13.75 L4.87 13.00 L3.61 14.21 L1.79 12.39 L3.00 11.14 L2.25 9.32 L0.51 9.29 L0.51 6.71 L2.25 6.68 L3.00 4.87 L1.79 3.61 L3.61 1.79 L4.86 3.00 L6.68 2.25 Z"/><circle cx="8" cy="8" r="3"/></svg>
<div class="t" style="top:435px;font-size:12px;color:#000;left:1746.57px;">#1</div>
<div class="t" style="top:435px;font-size:12px;color:#000;left:1835.91px;">project one</div>
<div class="t" style="top:462px;font-size:12px;color:#000;left:1541.34px;">Ticket</div>
<svg style="left:1726px;top:467px" width="17" height="10" viewBox="0 0 17 10" fill="#fff" stroke="#6e6eb2" stroke-width="1" stroke-linejoin="round">
<path d="M0.6 0.7 H15.6 V2.4 L13.2 5 L15.6 7.6 V9.3 H0.6 V7.6 L3 5 L0.6 2.4 Z"/>
<path d="M11.2 1 V9" stroke-width="0.7" stroke="#a9a9d2"/></svg>
<div class="t" style="top:462px;font-size:12px;color:#000;left:1746.57px;">#2</div>
<div class="t" style="top:462px;font-size:12px;color:#000;left:1835.82px;">Enter some quotes on filed names : error Message</div>
<div class="t" style="top:489px;font-size:12px;color:#000;left:1541.34px;">Ticket</div>
<svg style="left:1726px;top:494px" width="17" height="10" viewBox="0 0 17 10" fill="#fff" stroke="#6e6eb2" stroke-width="1" stroke-linejoin="round">
<path d="M0.6 0.7 H15.6 V2.4 L13.2 5 L15.6 7.6 V9.3 H0.6 V7.6 L3 5 L0.6 2.4 Z"/>
<path d="M11.2 1 V9" stroke-width="0.7" stroke="#a9a9d2"/></svg>
<div class="t" style="top:489px;font-size:12px;color:#000;left:1746.57px;">#4</div>
<div class="t" style="top:489px;font-size:12px;color:#000;left:1835.82px;">Performance down</div>
<div class="hl" style="left:1535px;top:527px;width:740px"></div>
<div class="arr" style="left:1539.4px;top:541px"></div>
<div class="t" style="top:534px;font-size:16px;color:#4d4d82;left:1551.13px;letter-spacing:-0.018px;">Miscellaneous</div>
<div class="t" style="top:572px;font-size:13.2px;color:#555555;right:589.04px;text-align:right;letter-spacing:0.038px;">don't receive project team</div>
<div class="t" style="top:588px;font-size:13.2px;color:#555555;right:593.36px;text-align:right;">mails</div>
<div class="cb" style="left:1719px;top:577px"></div>
<div class="hl" style="left:1535px;top:623px;width:740px"></div>
<div class="arr" style="left:1539.4px;top:637px"></div>
<div class="t" style="top:630px;font-size:16px;color:#4d4d82;left:1551.13px;letter-spacing:-0.010px;">List of tickets for this contact</div>
<div class="cell hd" style="left:1535px;top:659px;width:112px;height:28px"></div>
<div class="cell hd" style="left:1646px;top:659px;width:445px;height:28px"></div>
<div class="cell hd" style="left:2090px;top:659px;width:185px;height:28px"></div>
<div class="cell" style="left:1535px;top:686px;width:112px;height:28px"></div>
<div class="cell" style="left:1646px;top:686px;width:445px;height:28px"></div>
<div class="cell" style="left:2090px;top:686px;width:185px;height:28px"></div>
<div class="t" style="top:664px;font-size:13.2px;color:#52527c;left:1571.67px;">Ticket</div>
<div class="t" style="top:664px;font-size:13.2px;color:#52527c;left:1849.55px;">name</div>
<div class="t" style="top:664px;font-size:13.2px;color:#52527c;left:2162.20px;">status</div>
<svg style="left:1540.4px;top:694.4px" width="17" height="10" viewBox="0 0 17 10" fill="#fff" stroke="#6e6eb2" stroke-width="1" stroke-linejoin="round">
<path d="M0.6 0.7 H15.6 V2.4 L13.2 5 L15.6 7.6 V9.3 H0.6 V7.6 L3 5 L0.6 2.4 Z"/>
<path d="M11.2 1 V9" stroke-width="0.7" stroke="#a9a9d2"/></svg>
<div class="t" style="top:690px;font-size:12px;color:#000;left:1561.67px;">#2</div>
<div class="t" style="top:690px;font-size:12px;color:#000;left:1651.22px;">Enter some quotes on filed names : error Message</div>
<div class="b" style="left:2091px;top:687px;width:183px;height:26px;background:#8b4513;"></div>
<div class="b" style="left:2274px;top:687px;width:1px;height:27px;background:#cdd0d6;"></div>
<div class="b" style="left:2091px;top:713px;width:184px;height:1px;background:#cdd0d6;"></div>
<div class="t" style="top:690px;font-size:12px;color:#fff;left:2155.98px;">assigned</div>
</body></html>
